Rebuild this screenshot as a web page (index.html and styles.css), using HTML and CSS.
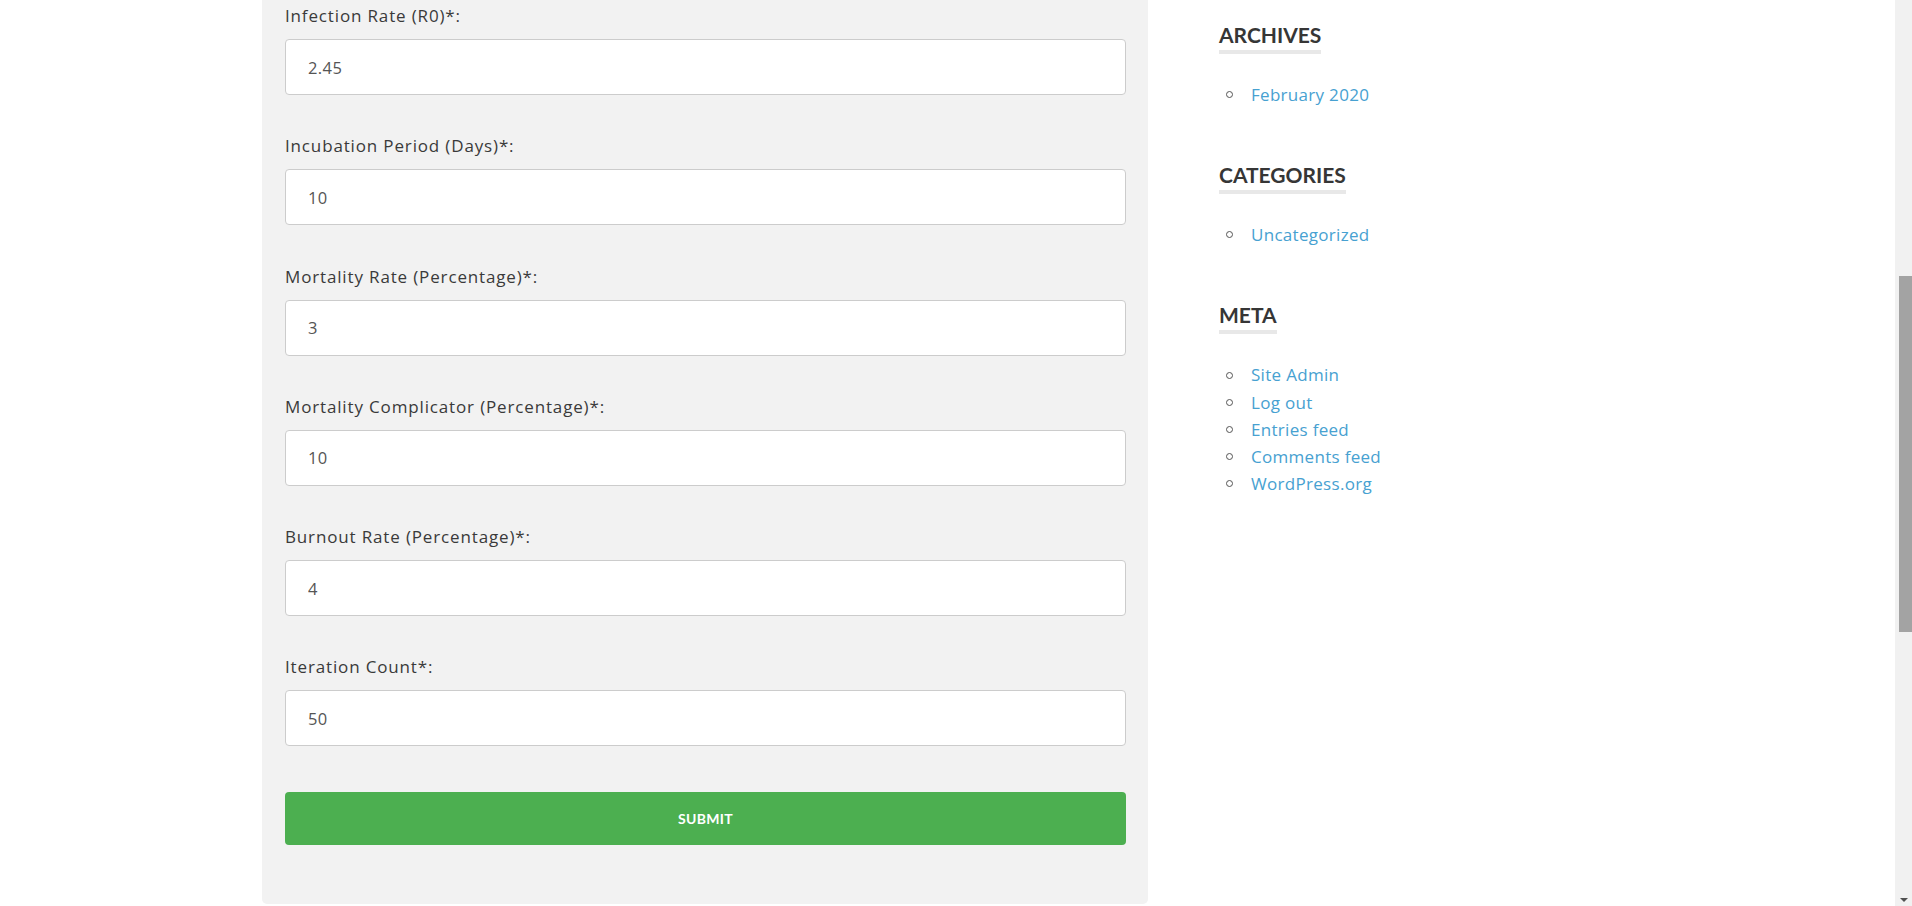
FILE: index.html
```html
<!DOCTYPE html>
<html lang="en">
<head>
<meta charset="utf-8">
<title>Simulation</title>
<link rel="stylesheet" href="styles.css">
</head>
<body>
<div class="viewport">
  <div class="page">
    <main class="main">
      <form class="sim-form">
        <div class="field">
          <label class="field-label">Infection Rate (R0)*:</label>
          <input class="field-input" type="text" value="2.45">
        </div>
        <div class="field">
          <label class="field-label">Incubation Period (Days)*:</label>
          <input class="field-input" type="text" value="10">
        </div>
        <div class="field">
          <label class="field-label">Mortality Rate (Percentage)*:</label>
          <input class="field-input" type="text" value="3">
        </div>
        <div class="field">
          <label class="field-label">Mortality Complicator (Percentage)*:</label>
          <input class="field-input" type="text" value="10">
        </div>
        <div class="field">
          <label class="field-label">Burnout Rate (Percentage)*:</label>
          <input class="field-input" type="text" value="4">
        </div>
        <div class="field">
          <label class="field-label">Iteration Count*:</label>
          <input class="field-input" type="text" value="50">
        </div>
        <button class="submit" type="button">SUBMIT</button>
      </form>
    </main>
    <aside class="sidebar">
      <section class="widget">
        <h2 class="widget-title">ARCHIVES</h2>
        <ul class="widget-list">
          <li><a href="#">February 2020</a></li>
        </ul>
      </section>
      <section class="widget">
        <h2 class="widget-title">CATEGORIES</h2>
        <ul class="widget-list">
          <li><a href="#">Uncategorized</a></li>
        </ul>
      </section>
      <section class="widget">
        <h2 class="widget-title">META</h2>
        <ul class="widget-list">
          <li><a href="#">Site Admin</a></li>
          <li><a href="#">Log out</a></li>
          <li><a href="#">Entries feed</a></li>
          <li><a href="#">Comments feed</a></li>
          <li><a href="#">WordPress.org</a></li>
        </ul>
      </section>
    </aside>
  </div>
  <div class="scrollbar">
    <div class="scroll-thumb"></div>
    <div class="scroll-arrow"></div>
  </div>
</div>
</body>
</html>
```

FILE: styles.css
```css
html, body {
  margin: 0;
  padding: 0;
  height: 906px;
  overflow: hidden;
  background: #ffffff;
}

body {
  font-family: "Open Sans", "Noto Sans", sans-serif;
  color: #333333;
}

.viewport {
  display: flex;
  height: 906px;
}

.page {
  flex: 1;
  display: flex;
  align-items: flex-start;
  gap: 71px;
  padding-left: 262px;
}

.main {
  width: 886px;
  box-sizing: border-box;
  background: #f2f2f2;
  padding: 4px 22px 59px 23px;
  border-radius: 0 0 5px 5px;
}

.sim-form {
  display: flex;
  flex-direction: column;
}

.field {
  display: flex;
  flex-direction: column;
  margin-bottom: 39.25px;
}

.field-label {
  font-size: 17px;
  line-height: 24px;
  letter-spacing: 0.85px;
  color: #3a3a3a;
}

.field-input {
  margin-top: 11px;
  height: 56px;
  box-sizing: border-box;
  width: 100%;
  border: 1px solid #cccccc;
  border-radius: 4px;
  background: #ffffff;
  padding: 0 22px;
  font-family: "Open Sans", "Noto Sans", sans-serif;
  font-size: 16.5px;
  letter-spacing: 0.4px;
  color: #555555;
  outline: none;
}

.submit {
  margin-top: 6px;
  height: 53px;
  border: none;
  border-radius: 4px;
  background: #4caf50;
  color: #ffffff;
  font-family: Lato, "Open Sans", sans-serif;
  font-weight: 700;
  font-size: 14px;
  letter-spacing: 0.3px;
  cursor: pointer;
}

.sidebar {
  width: 414px;
  padding-top: 22px;
}

.widget {
  margin-bottom: 54px;
}

.widget-title {
  display: inline-block;
  margin: 0;
  font-family: Lato, "Open Sans", sans-serif;
  font-weight: 700;
  font-size: 21px;
  line-height: 25px;
  color: #363636;
  padding-bottom: 3px;
  border-bottom: 4px solid #e8e8e8;
}

.widget-list {
  margin: 27px 0 0 0;
  padding-left: 7px;
  list-style: none;
}

.widget-list li {
  display: flex;
  align-items: center;
  gap: 18px;
  font-size: 17px;
  line-height: 27.2px;
  letter-spacing: 0.3px;
}

.widget-list li::before {
  content: "";
  flex: none;
  width: 5px;
  height: 5px;
  border: 1.3px solid #555555;
  border-radius: 50%;
}

.widget-list a {
  color: #47a1d1;
  text-decoration: none;
}

.scrollbar {
  width: 17px;
  background: #f1f1f1;
  display: flex;
  flex-direction: column;
  align-items: center;
}

.scroll-thumb {
  margin-top: 276px;
  width: 13px;
  height: 356px;
  background: #a3a3a3;
  align-self: flex-end;
}

.scroll-arrow {
  margin-top: auto;
  margin-bottom: 4px;
  width: 0;
  height: 0;
  border-left: 4px solid transparent;
  border-right: 4px solid transparent;
  border-top: 4px solid #505050;
}
```
